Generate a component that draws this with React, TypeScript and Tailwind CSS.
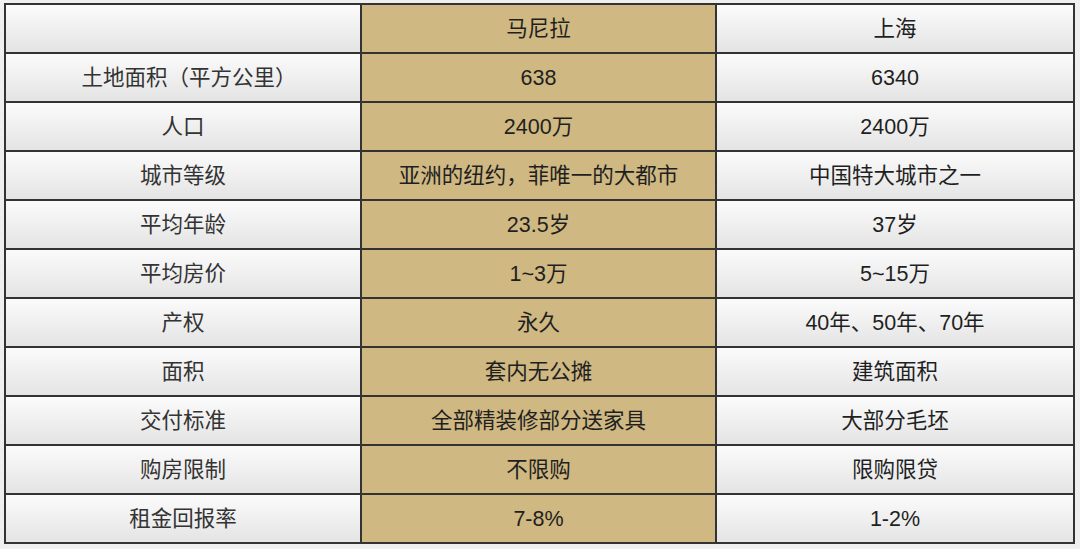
import React from "react";

const rows: [string, string, string][] = [
  ["", "马尼拉", "上海"],
  ["土地面积（平方公里）", "638", "6340"],
  ["人口", "2400万", "2400万"],
  ["城市等级", "亚洲的纽约，菲唯一的大都市", "中国特大城市之一"],
  ["平均年龄", "23.5岁", "37岁"],
  ["平均房价", "1~3万", "5~15万"],
  ["产权", "永久", "40年、50年、70年"],
  ["面积", "套内无公摊", "建筑面积"],
  ["交付标准", "全部精装修部分送家具", "大部分毛坯"],
  ["购房限制", "不限购", "限购限贷"],
  ["租金回报率", "7-8%", "1-2%"],
];

export default function App() {
  return (
    <div className="w-[1080px] h-[549px] bg-[#efefef] pt-[3px] pl-[4px] overflow-hidden">
      <div
        className="grid grid-cols-[354px_353px_356px] gap-[2px] p-[2px] bg-[#333333] w-fit"
        style={{ fontFamily: '"Liberation Sans", "Noto Sans CJK SC", sans-serif' }}
      >
        {rows.map((r, i) => (
          <React.Fragment key={i}>
            <div
              className={
                "h-[47px] pt-[2px] flex items-center justify-center bg-gradient-to-b from-[#fbfbfb] to-[#e4e4e4] text-[21.5px] text-[#333333] " +
                (i === 1 ? "pl-[12px]" : "")
              }
            >
              {r[0]}
            </div>
            <div className="h-[47px] pt-[2px] flex items-center justify-center bg-[#cfb882] text-[21.5px] text-[#1f1f1f]">
              {r[1]}
            </div>
            <div className="h-[47px] pt-[2px] flex items-center justify-center bg-gradient-to-b from-[#fbfbfb] to-[#e4e4e4] text-[21.5px] text-[#1f1f1f]">
              {r[2]}
            </div>
          </React.Fragment>
        ))}
      </div>
    </div>
  );
}
